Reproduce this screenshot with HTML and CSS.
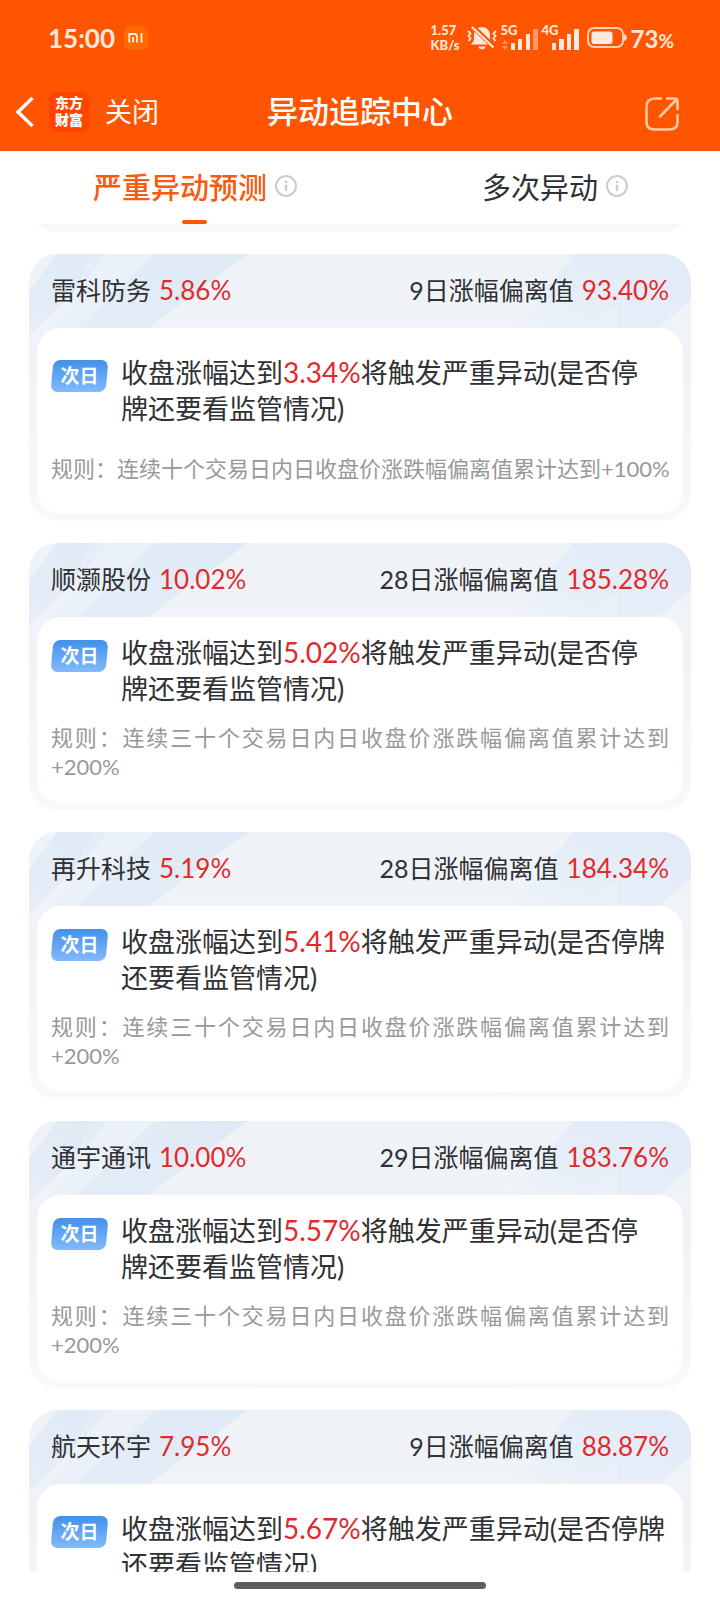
FILE: index.html
```html
<!DOCTYPE html>
<html lang="zh-CN">
<head>
  <meta charset="UTF-8" />
  <meta name="viewport" content="width=device-width, initial-scale=1.0" />
  <title>异动追踪中心</title>
  <link rel="stylesheet" href="styles.css">
</head>
<body>
  <svg class="defs" aria-hidden="true">
    <defs>
      <linearGradient id="fadeLeft" x1="0" y1="1" x2="1" y2="0">
        <stop offset="0" stop-color="#e6eef7" />
        <stop offset="1" stop-color="#dfeaf6" />
      </linearGradient>
      <linearGradient id="fadeRight" x1="0" y1="1" x2="1" y2="0">
        <stop offset="0" stop-color="#eff3f8" />
        <stop offset="0.5" stop-color="#e4edf8" />
        <stop offset="1" stop-color="#e1ebf7" />
      </linearGradient>
    </defs>
    <symbol id="streaks" viewBox="0 0 662 110" preserveAspectRatio="none">
      <path d="M28 0H64L46 38L0 82V37Z" fill="url(#fadeLeft)" />
      <path d="M64 0H79L50 34Z" fill="#e4edf7" />
      <path d="M50 38L79 0H126L46 75H20Z" fill="#ebf1f8" />
      <path d="M126 0H219L118 75L70 110H10L46 75Z" fill="url(#fadeLeft)" />
      <path d="M544 0H662V46L628 75H485Z" fill="url(#fadeRight)" />
      <path d="M588 50V75H555Z" fill="#ebf1f9" />
    </symbol>
    <symbol id="info" viewBox="0 0 22 22">
      <circle cx="11" cy="11" r="10" fill="none" stroke="#ccc" stroke-width="2" />
      <circle cx="11" cy="6.8" r="1.4" fill="#ccc" />
      <path d="M11 9.5V16" stroke="#ccc" stroke-width="2.4" />
    </symbol>
  </svg>

  <div class="page">
    <header class="header">
      <div class="status-bar">
        <div class="status-left">
          <span class="clock">15:00</span>
          <svg class="mi-icon" viewBox="0 0 24 24" aria-hidden="true">
            <rect width="24" height="24" rx="6" fill="#ff6a00" />
            <path d="M5.3 16.5V8H10.5Q13 8 13 10.5V16.5M9.1 11V16.5M17.5 7.2V16.5" fill="none" stroke="#fff0e6" stroke-width="1.8" />
          </svg>
        </div>
        <div class="status-right">
          <span class="net-speed">1.57<br>KB/s</span>
          <svg class="bell-icon" viewBox="0 0 30 26" aria-hidden="true">
            <path d="M15 2a8 8 0 0 1 8 8V15L26 19.5H4L7 15V10A8 8 0 0 1 15 2Z" fill="#ffe9dd" />
            <path d="M11.5 21.5H18.5A3.5 2.7 0 0 1 11.5 21.5Z" fill="#ffe9dd" />
            <path d="M4 0L28 23" stroke="#ff5500" stroke-width="5" />
            <path d="M5 2L26.5 22.5" stroke="#ffe9dd" stroke-width="2.2" />
            <path d="M1 6L3.5 8.5L1.5 11L3.5 13.5L1.5 16M29 6L26.5 8.5L28.5 11L26.5 13.5L28.5 16" fill="none" stroke="#ffe9dd" stroke-width="1.8" />
          </svg>
          <div class="signal">
            <span class="signal-label">5G</span>
            <svg class="signal-icon" viewBox="0 0 37 26" aria-hidden="true">
              <path d="M1 19L4 15L7 19ZM1 21L4 25L7 21Z" fill="#ff9966" />
              <path d="M10 18h4v7h-4zM17 14h4v11h-4zM25 9h4v16h-4z" fill="#ffe9dd" />
              <path d="M32 4h5v21h-5z" fill="#ff9966" />
            </svg>
          </div>
          <div class="signal">
            <span class="signal-label">4G</span>
            <svg class="signal-icon" viewBox="0 0 37 26" aria-hidden="true">
              <path d="M10 18h4v7h-4zM17 14h5v11h-5zM25 9h4v16h-4zM32 4h5v21h-5z" fill="#ffe9dd" />
            </svg>
          </div>
          <svg class="battery-icon" viewBox="0 0 40 22" aria-hidden="true">
            <rect x="1" y="1" width="35" height="19" rx="6" fill="none" stroke="#ffd2b8" stroke-width="2" />
            <rect x="4.5" y="4.5" width="21" height="12.5" rx="2.5" fill="#ffe9dd" />
            <path d="M37 7Q40 8 40 10.5Q40 13 37 14Z" fill="#ffd2b8" />
          </svg>
          <span class="battery-text">73<small>%</small></span>
        </div>
      </div>

      <nav class="nav-bar">
        <div class="nav-left">
          <button class="icon-btn" type="button" aria-label="返回">
            <svg class="back-icon" viewBox="0 0 20 32" aria-hidden="true">
              <path d="M17.5 2L3 16L17.5 30" fill="none" stroke="#fff" stroke-width="3.4" />
            </svg>
          </button>
          <span class="app-logo">东方<br>财富</span>
          <button class="close-btn" type="button">关闭</button>
        </div>
        <h1 class="nav-title">异动追踪中心</h1>
        <button class="icon-btn share-btn" type="button" aria-label="分享">
          <svg class="share-icon" viewBox="0 0 34 34" aria-hidden="true">
            <path d="M16 1.5H10Q1.5 1.5 1.5 10V25Q1.5 32.5 10 32.5H24Q32.5 32.5 32.5 25V18M22 1.5H29.5Q32.5 1.5 32.5 4.5V12M31.5 2.5L15 19.5" fill="none" stroke="#ffc9a8" stroke-width="2.6" stroke-linecap="round" />
          </svg>
        </button>
      </nav>
    </header>

    <div class="tabs">
      <button class="tab active" type="button">严重异动预测<svg class="info-icon" aria-hidden="true"><use href="#info" /></svg></button>
      <button class="tab" type="button">多次异动<svg class="info-icon" aria-hidden="true"><use href="#info" /></svg></button>
    </div>

    <main class="list">
      <div class="card card-passed"></div>

      <section class="card">
        <svg class="card-streaks" aria-hidden="true"><use href="#streaks" /></svg>
        <div class="card-head">
          <h2>雷科防务<span class="num">5.86%</span></h2>
          <p>9日涨幅偏离值<span class="num">93.40%</span></p>
        </div>
        <div class="card-body">
          <div class="notice">
            <span class="badge">次日</span>
            <p>收盘涨幅达到<em>3.34%</em>将触发严重异动(是否停<br>牌还要看监管情况)</p>
          </div>
          <p class="rule rule-single">规则：连续十个交易日内日收盘价涨跌幅偏离值累计达到+100%</p>
        </div>
      </section>

      <section class="card">
        <svg class="card-streaks" aria-hidden="true"><use href="#streaks" /></svg>
        <div class="card-head">
          <h2>顺灏股份<span class="num">10.02%</span></h2>
          <p>28日涨幅偏离值<span class="num">185.28%</span></p>
        </div>
        <div class="card-body">
          <div class="notice">
            <span class="badge">次日</span>
            <p>收盘涨幅达到<em>5.02%</em>将触发严重异动(是否停<br>牌还要看监管情况)</p>
          </div>
          <p class="rule">规则：连续三十个交易日内日收盘价涨跌幅偏离值累计达到+200%</p>
        </div>
      </section>

      <section class="card">
        <svg class="card-streaks" aria-hidden="true"><use href="#streaks" /></svg>
        <div class="card-head">
          <h2>再升科技<span class="num">5.19%</span></h2>
          <p>28日涨幅偏离值<span class="num">184.34%</span></p>
        </div>
        <div class="card-body">
          <div class="notice">
            <span class="badge">次日</span>
            <p>收盘涨幅达到<em>5.41%</em>将触发严重异动(是否停牌<br>还要看监管情况)</p>
          </div>
          <p class="rule">规则：连续三十个交易日内日收盘价涨跌幅偏离值累计达到+200%</p>
        </div>
      </section>

      <section class="card">
        <svg class="card-streaks" aria-hidden="true"><use href="#streaks" /></svg>
        <div class="card-head">
          <h2>通宇通讯<span class="num">10.00%</span></h2>
          <p>29日涨幅偏离值<span class="num">183.76%</span></p>
        </div>
        <div class="card-body">
          <div class="notice">
            <span class="badge">次日</span>
            <p>收盘涨幅达到<em>5.57%</em>将触发严重异动(是否停<br>牌还要看监管情况)</p>
          </div>
          <p class="rule">规则：连续三十个交易日内日收盘价涨跌幅偏离值累计达到+200%</p>
        </div>
      </section>

      <section class="card">
        <svg class="card-streaks" aria-hidden="true"><use href="#streaks" /></svg>
        <div class="card-head">
          <h2>航天环宇<span class="num">7.95%</span></h2>
          <p>9日涨幅偏离值<span class="num">88.87%</span></p>
        </div>
        <div class="card-body">
          <div class="notice">
            <span class="badge">次日</span>
            <p>收盘涨幅达到<em>5.67%</em>将触发严重异动(是否停牌<br>还要看监管情况)</p>
          </div>
          <p class="rule rule-single">规则：连续十个交易日内日收盘价涨跌幅偏离值累计达到+100%</p>
        </div>
      </section>
    </main>

    <footer class="home-bar"><span class="home-indicator"></span></footer>
  </div>
</body>
</html>
```

FILE: styles.css
```css
* {
  box-sizing: border-box;
}

body {
  margin: 0;
  background: #fff;
  color: #303133;
  font-family: Lato, "Noto Sans CJK SC", sans-serif;
}

h1, h2, p {
  margin: 0;
  font-weight: 400;
}

button {
  padding: 0;
  border: none;
  background: none;
  color: inherit;
  font-family: inherit;
  cursor: pointer;
}

svg {
  display: block;
  flex-shrink: 0;
}

.defs {
  position: absolute;
  width: 0;
  height: 0;
}

.page {
  display: flex;
  flex-direction: column;
  height: 100vh;
}

/* 顶部 */
.header {
  flex-shrink: 0;
  background: #ff5500;
  color: #fff;
}

.status-bar {
  display: flex;
  justify-content: space-between;
  align-items: center;
  height: 72px;
  padding: 4px 46px 0 48px;
  color: #ffe9dd;
}

.status-left,
.status-right {
  display: flex;
  align-items: center;
}

.clock {
  font-size: 26px;
  font-weight: 700;
}

.mi-icon {
  width: 24px;
  height: 24px;
  margin-left: 9px;
}

.net-speed {
  margin-right: 7px;
  font-size: 13px;
  font-weight: 900;
  line-height: 15px;
}

.bell-icon {
  width: 30px;
  height: 26px;
  margin-right: 4px;
}

.signal {
  position: relative;
  margin-right: 4px;
}

.signal-label {
  position: absolute;
  top: -2px;
  left: 0;
  font-size: 13px;
  font-weight: 900;
  line-height: 14px;
}

.signal-icon {
  width: 37px;
  height: 26px;
}

.battery-icon {
  width: 40px;
  height: 22px;
  margin: 0 4px;
}

.battery-text {
  font-size: 24px;
  font-weight: 700;
}

.battery-text small {
  font-size: 19px;
}

.nav-bar {
  display: grid;
  grid-template-columns: 1fr auto 1fr;
  align-items: center;
  height: 79px;
  padding: 0 15px;
}

.nav-left {
  display: flex;
  align-items: center;
}

.back-icon {
  width: 20px;
  height: 32px;
}

.app-logo {
  width: 40px;
  margin: 0 16px 0 14px;
  padding: 2px 0 4px;
  border-radius: 8px;
  background: #ff4400;
  font-size: 14px;
  font-weight: 900;
  line-height: 17px;
  text-align: center;
}

.close-btn {
  padding-bottom: 2px;
  font-size: 27px;
}

.nav-title {
  padding-bottom: 4px;
  font-size: 31px;
  font-weight: 500;
}

.share-btn {
  justify-self: end;
  margin: 4px 26px 0 0;
}

.share-icon {
  width: 34px;
  height: 34px;
}

/* 标签 */
.tabs {
  display: flex;
  flex-shrink: 0;
  height: 73px;
}

.tab {
  position: relative;
  display: flex;
  flex: 1;
  justify-content: center;
  align-items: center;
  gap: 8px;
  padding: 0 0 4px 30px;
  font-size: 29px;
}

.tab.active {
  color: #f95a0c;
  font-weight: 500;
}

.tab.active::after {
  content: "";
  position: absolute;
  bottom: 0;
  left: calc(50% + 2px);
  width: 25px;
  height: 4px;
  border-radius: 2px;
  background: #ff5500;
}

.info-icon {
  width: 22px;
  height: 22px;
}

/* 列表 */
.list {
  flex: 1;
  min-height: 0;
  padding: 0 29px;
  overflow: hidden;
}

.card {
  position: relative;
  margin-bottom: 22px;
  padding: 0 8px 7px;
  border-radius: 28px;
  background: linear-gradient(#eff3f8, #f0f4f9 50%, #f7f9fb);
  overflow: hidden;
}

/* 已滚出可视区的卡片 */
.card-passed {
  height: 80px;
  margin-top: -72px;
  background: #f7f8fa;
}

.card-streaks {
  position: absolute;
  top: 0;
  left: 0;
  width: 100%;
  height: 110px;
}

.card-head {
  position: relative;
  display: flex;
  justify-content: space-between;
  align-items: center;
  height: 74px;
  padding: 0 14px 4px;
}

.card-head h2,
.card-head p {
  font-size: 25px;
}

.num {
  margin-left: 8px;
  color: #e02b2d;
  font-size: 26px;
}

.card-body {
  position: relative;
  display: flex;
  flex-direction: column;
  justify-content: space-evenly;
  min-height: 186px;
  padding: 0 14px 5px;
  border-radius: 24px;
  background: #fff;
}

.notice {
  display: flex;
  gap: 13px;
  font-size: 27px;
  line-height: 36px;
  white-space: nowrap;
}

.notice em {
  color: #e02b2d;
  font-size: 28px;
  font-style: normal;
}

.badge {
  position: relative;
  z-index: 0;
  width: 57px;
  height: 32px;
  margin-top: 6px;
  color: #fff;
  font-size: 19px;
  font-weight: 700;
  line-height: 32px;
  text-align: center;
}

.badge::before {
  content: "";
  position: absolute;
  inset: 0 1px;
  z-index: -1;
  border-radius: 7px;
  background: linear-gradient(#4391e9, #82b9fd);
  transform: skewX(-5deg);
}

.rule {
  color: #999;
  font-size: 22px;
  line-height: 29px;
  text-align: justify;
}

.rule-single {
  white-space: nowrap;
}

/* 底部手势条 */
.home-bar {
  display: flex;
  flex-shrink: 0;
  justify-content: center;
  height: 28px;
  padding-top: 10px;
}

.home-indicator {
  width: 35%;
  height: 7px;
  border-radius: 4px;
  background: #5e5e5e;
}
```
